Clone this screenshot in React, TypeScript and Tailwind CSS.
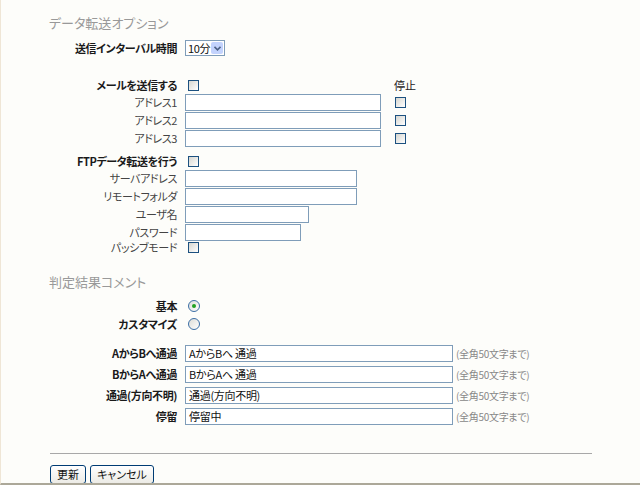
import React from "react";

const FONT = "font-['Noto_Sans_CJK_JP','Noto_Sans',sans-serif] [font-feature-settings:'palt']";

function Checkbox({ className = "" }: { className?: string }) {
  return (
    <span
      className={`inline-block h-[11px] w-[11px] shrink-0 border border-[#1c5180] bg-linear-to-br from-[#d6d6d0] to-white ${className}`}
    />
  );
}

function Radio({ checked }: { checked?: boolean }) {
  return (
    <span className="ml-[3px] flex h-[12px] w-[12px] items-center justify-center rounded-full border border-[#3b6ea5] bg-linear-to-br from-[#dcdcd7] to-white">
      {checked && <span className="h-[4px] w-[4px] rounded-full bg-[#21a121]" />}
    </span>
  );
}

function TextBox({ w, value }: { w: string; value?: string }) {
  return (
    <div
      className={`flex h-[17px] items-center whitespace-nowrap border border-[#7f9db9] bg-white px-[3px] text-[11px] tracking-[-0.3px] text-[#111] ${w}`}
    >
      {value}
    </div>
  );
}

function Row({
  label,
  bold,
  h = "h-[16px]",
  className = "",
  children,
}: {
  label: string;
  bold?: boolean;
  h?: string;
  className?: string;
  children?: React.ReactNode;
}) {
  return (
    <div className={`flex items-center ${h} ${className}`}>
      <div
        className={`w-[176px] whitespace-nowrap text-right text-[11px] leading-none tracking-[-0.4px] ${
          bold ? "font-bold text-[#1a1a1a]" : "text-[#444]"
        }`}
      >
        {label}
      </div>
      <div className="ml-[8px] flex items-center">{children}</div>
    </div>
  );
}

function Note() {
  return <span className="ml-[3px] whitespace-nowrap text-[10px] tracking-[-0.3px] text-[#888]">(全角50文字まで)</span>;
}

export default function App() {
  return (
    <div
      className={`relative h-[485px] w-[640px] overflow-hidden border-b-2 border-l border-b-[#aca899] border-l-[#efe6d6] bg-[#fdfdfa] ${FONT}`}
    >
      <div className="ml-[48px] mt-[15px] h-[16px] text-[13px] leading-[16px] text-[#999]">
        データ転送オプション
      </div>

      <Row label="送信インターバル時間" bold className="mt-[9px]">
        <div className="flex h-[16px] w-[40px] items-center whitespace-nowrap border border-[#7f9db9] bg-white text-[11px] text-[#111]">
          <span className="flex-1 pl-[2px] leading-none tracking-[-0.3px]">10分</span>
          <span className="mr-px flex h-[12px] w-[12px] shrink-0 items-center justify-center rounded-[2px] bg-[#c3d3fd]">
            <svg width="7" height="5" viewBox="0 0 7 5">
              <path d="M0.5 0.8 L3.5 3.8 L6.5 0.8" fill="none" stroke="#4d6185" strokeWidth="1.6" />
            </svg>
          </span>
        </div>
      </Row>

      <div className="mt-[21px] flex">
        <div>
          <Row label="メールを送信する" bold>
            <Checkbox className="ml-[3px]" />
          </Row>
          <Row label="アドレス1" h="h-[18px]">
            <TextBox w="w-[196px]" />
          </Row>
          <Row label="アドレス2" h="h-[18px]">
            <TextBox w="w-[196px]" />
          </Row>
          <Row label="アドレス3" h="h-[18px]">
            <TextBox w="w-[196px]" />
          </Row>
        </div>
        <div className="ml-[13px] flex flex-col">
          <div className="flex h-[16px] items-center text-[11px] leading-none text-[#222]">停止</div>
          <div className="flex h-[18px] items-center">
            <Checkbox className="ml-[1px]" />
          </div>
          <div className="flex h-[18px] items-center">
            <Checkbox className="ml-[1px]" />
          </div>
          <div className="flex h-[18px] items-center">
            <Checkbox className="ml-[1px]" />
          </div>
        </div>
      </div>

      <Row label="FTPデータ転送を行う" bold className="mt-[6px]">
        <Checkbox className="ml-[3px]" />
      </Row>
      <Row label="サーバアドレス" h="h-[18px]">
        <TextBox w="w-[172px]" />
      </Row>
      <Row label="リモートフォルダ" h="h-[18px]">
        <TextBox w="w-[172px]" />
      </Row>
      <Row label="ユーザ名" h="h-[18px]">
        <TextBox w="w-[124px]" />
      </Row>
      <Row label="パスワード" h="h-[18px]">
        <TextBox w="w-[116px]" />
      </Row>
      <Row label="パッシブモード" h="h-[12px]">
        <Checkbox className="ml-[3px]" />
      </Row>

      <div className="ml-[48px] mt-[21px] h-[16px] text-[13px] leading-[16px] text-[#999]">
        判定結果コメント
      </div>

      <Row label="基本" bold h="h-[18px]" className="mt-[7px]">
        <Radio checked />
      </Row>
      <Row label="カスタマイズ" bold h="h-[18px]">
        <Radio />
      </Row>

      <div className="mt-[11px] flex flex-col gap-[3px]">
        <Row label="AからBへ通過" bold h="h-[18px]">
          <TextBox w="w-[268px]" value="AからBへ 通過" />
          <Note />
        </Row>
        <Row label="BからAへ通過" bold h="h-[18px]">
          <TextBox w="w-[268px]" value="BからAへ 通過" />
          <Note />
        </Row>
        <Row label="通過(方向不明)" bold h="h-[18px]">
          <TextBox w="w-[268px]" value="通過(方向不明)" />
          <Note />
        </Row>
        <Row label="停留" bold h="h-[18px]">
          <TextBox w="w-[268px]" value="停留中" />
          <Note />
        </Row>
      </div>

      <div className="ml-[49px] mt-[28px] h-px w-[542px] bg-[#a8a8a8]" />

      <div className="ml-[49px] mt-[11px] flex gap-[4px]">
        <button className="h-[19px] rounded-[3px] border border-[#003c74] bg-linear-to-b from-white to-[#ecebe6] px-[6px] text-[11px] leading-none text-[#111]">
          更新
        </button>
        <button className="h-[19px] rounded-[3px] border border-[#003c74] bg-linear-to-b from-white to-[#ecebe6] px-[6px] text-[11px] leading-none text-[#111]">
          キャンセル
        </button>
      </div>
    </div>
  );
}
